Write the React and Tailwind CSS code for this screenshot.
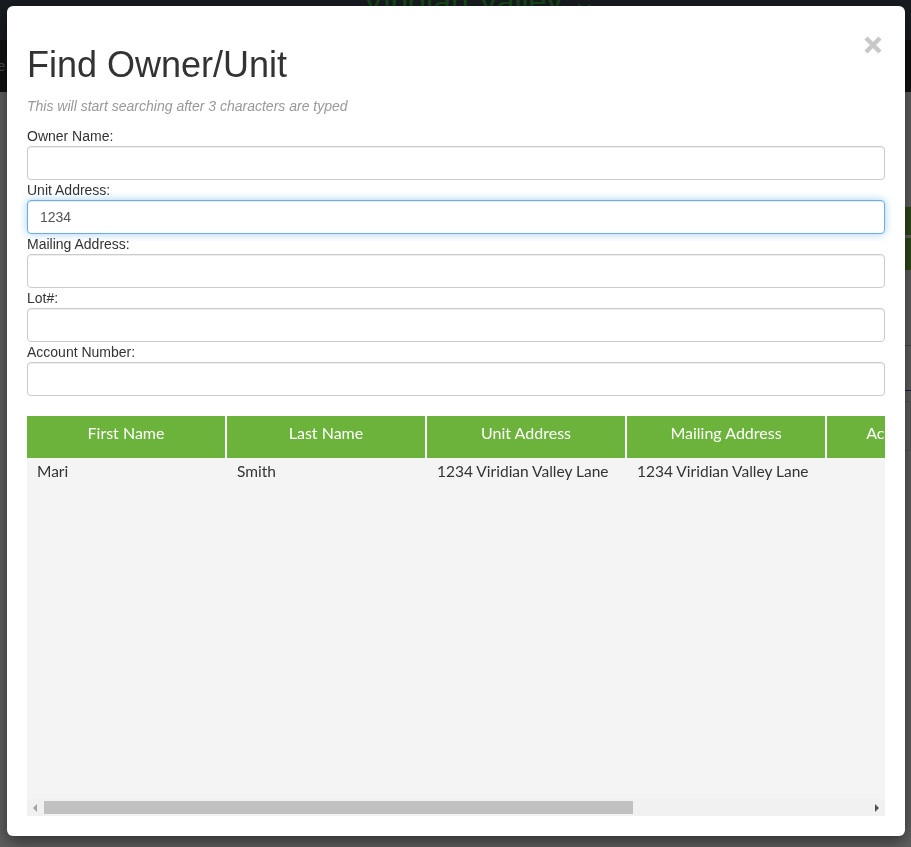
import { useState } from "react";

const fields = [
  { label: "Owner Name:", value: "" },
  { label: "Unit Address:", value: "1234", focused: true },
  { label: "Mailing Address:", value: "" },
  { label: "Lot#:", value: "" },
  { label: "Account Number:", value: "" },
];

const columns = [
  "First Name",
  "Last Name",
  "Unit Address",
  "Mailing Address",
  "Account Number",
  "Lot#",
];

const rows = [
  ["Mari", "Smith", "1234 Viridian Valley Lane", "1234 Viridian Valley Lane", "", ""],
];

function Field({ label, value, focused }) {
  const [val, setVal] = useState(value);
  return (
    <div className="flex flex-col">
      <label className="text-[14px] leading-5 text-[#333]">{label}</label>
      <input
        value={val}
        onChange={(e) => setVal(e.target.value)}
        className={`h-[34px] w-full rounded-[4px] border bg-white px-3 text-[14px] text-[#555] outline-none ${
          focused
            ? "border-[#66afe9] shadow-[inset_0_1px_1px_rgba(0,0,0,0.075),0_0_8px_rgba(102,175,233,0.6)]"
            : "border-[#ccc] shadow-[inset_0_1px_1px_rgba(0,0,0,0.075)]"
        }`}
      />
    </div>
  );
}

// fake horizontal scrollbar under the results grid
function Scrollbar() {
  return (
    <div className="flex h-[17px] items-center bg-[#f1f1f1]">
      <div className="flex w-[17px] justify-center">
        <svg width="5" height="8" viewBox="0 0 5 8">
          <path d="M4 0 L0 4 L4 8 Z" fill="#a3a3a3" />
        </svg>
      </div>
      <div className="h-[13px] w-[589px] bg-[#c1c1c1]" />
      <div className="flex-1" />
      <div className="flex w-[17px] justify-center">
        <svg width="5" height="8" viewBox="0 0 5 8">
          <path d="M1 0 L5 4 L1 8 Z" fill="#505050" />
        </svg>
      </div>
    </div>
  );
}

function Results() {
  return (
    <div className="flex h-[400px] flex-col">
      <div className="flex-1 overflow-hidden bg-[#f4f4f4] font-['Lato',sans-serif]">
        <div className="grid w-[1200px] grid-cols-[repeat(6,200px)]">
          {columns.map((c) => (
            <div
              key={c}
              className="h-[42px] border-r-2 border-white bg-[#6cb33b] pt-[5px] text-center text-[16px] leading-6 text-white"
            >
              {c}
            </div>
          ))}
          {rows.map((r, i) =>
            r.map((cell, j) => (
              <div
                key={`${i}-${j}`}
                className="whitespace-nowrap py-px pl-[10px] text-[15.5px] leading-6 text-[#333]"
              >
                {cell}
              </div>
            ))
          )}
        </div>
      </div>
      <Scrollbar />
    </div>
  );
}

export default function App() {
  return (
    <div className="relative h-[847px] overflow-hidden bg-white font-['Liberation_Sans',Arial,sans-serif]">
      {/* page behind the dialog */}
      <header className="flex h-10 justify-center overflow-hidden bg-[#414956]">
        <span className="-mt-[15px] ml-[50px] text-[32px] leading-none text-[#38c238]">
          Viridian Valley ⌄
        </span>
      </header>
      <nav className="flex h-[52px] items-center bg-[#2e2e2e] text-[14px] text-[#ccc]">
        <span className="-ml-[32px]">Home</span>
      </nav>
      <main className="flex">
        <div className="flex-1" />
        <div className="flex w-[40px] flex-col pt-[115px]">
          <div className="h-[28px] bg-[#74c23e]" />
          <div className="mt-[3px] h-[32px] bg-[#74c23e]" />
          <div className="mt-[75px] border-t border-[#bbb]" />
          <div className="mt-[44px] border-t border-[#2b5aa8]" />
          <div className="mt-[10px] h-[50px] border border-[#ddd]" />
        </div>
      </main>

      <div className="fixed inset-0 bg-black/[0.63]" />

      <div className="fixed inset-0 pl-[7px] pt-[6px]">
        <div className="relative flex h-[830px] w-[898px] flex-col rounded-[6px] bg-white px-5 pb-5 pt-[39px] shadow-[0_5px_15px_rgba(0,0,0,0.5)]">
          <button className="absolute right-[22px] top-[30px]" aria-label="Close">
            <svg width="20" height="18" viewBox="0 0 20 18">
              <path
                d="M3 2 L17 16 M17 2 L3 16"
                stroke="#c8c8c8"
                strokeWidth="4.5"
                strokeLinecap="butt"
              />
            </svg>
          </button>
          <h1 className="text-[36px] leading-[40px] text-[#333]">Find Owner/Unit</h1>
          <p className="mt-[11px] text-[14px] italic leading-5 text-[#999]">
            This will start searching after 3 characters are typed
          </p>
          <div className="mt-[10px] flex flex-col">
            {fields.map((f) => (
              <Field key={f.label} {...f} />
            ))}
          </div>
          <div className="mt-5">
            <Results />
          </div>
        </div>
      </div>
    </div>
  );
}
